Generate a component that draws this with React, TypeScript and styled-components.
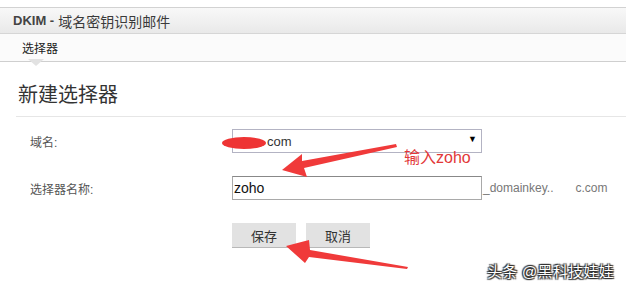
import React from "react";
import styled, { createGlobalStyle } from "styled-components";

const GlobalStyle = createGlobalStyle`
  html, body {
    margin: 0;
    padding: 0;
    background: #ffffff;
  }
  body {
    font-family: Arial, "Liberation Sans", "Noto Sans CJK SC", sans-serif;
    color: #333;
  }
`;

const Page = styled.div`
  position: relative;
  width: 626px;
  height: 288px;
  padding-top: 7px;
  box-sizing: border-box;
  overflow: hidden;
`;

const TitleBar = styled.div`
  height: 27px;
  border-top: 1px solid #d2d2d2;
  border-bottom: 1px solid #d6d6d6;
  background: linear-gradient(#f8f8f8, #e9e9e9);
  display: flex;
  align-items: center;
  padding-left: 13px;
  font-size: 13px;
  font-weight: bold;
  color: #444;
  box-sizing: border-box;
`;

const TitleCn = styled.span`
  font-weight: normal;
  font-size: 14px;
  margin-left: 4px;
  color: #3a3a3a;
`;

const TabBar = styled.div`
  height: 28px;
  background: #fbfbfb;
  border-bottom: 1px solid #cfcfcf;
  display: flex;
  align-items: center;
  padding-left: 22px;
  box-sizing: border-box;
`;

const Tab = styled.div`
  position: relative;
  font-size: 12px;
  color: #222;
  &::after {
    content: "";
    position: absolute;
    left: 6px;
    top: 20px;
    border-left: 8px solid transparent;
    border-right: 8px solid transparent;
    border-top: 7px solid #e2e2e2;
  }
`;

const Content = styled.div`
  padding: 22px 0 0 16px;
`;

const Heading = styled.h2`
  margin: 0;
  padding: 0 0 10px 2px;
  font-size: 20px;
  font-weight: normal;
  color: #333;
  line-height: 22px;
  border-bottom: 1px solid #e6e6e6;
`;

const Form = styled.div`
  display: grid;
  grid-template-columns: 202px auto;
  row-gap: 23px;
  padding: 12px 0 0 14px;
  align-items: center;
`;

const Label = styled.div`
  font-size: 12px;
  color: #555;
`;

const Field = styled.div`
  display: flex;
  align-items: center;
  position: relative;
`;

const SelectBox = styled.div`
  position: relative;
  width: 250px;
  height: 24px;
  border: 1px solid #b3b3c3;
  box-sizing: border-box;
  display: flex;
  align-items: center;
  padding-left: 34px;
  font-size: 13px;
  color: #333;
`;

const Redact = styled.div`
  position: absolute;
  left: -11px;
  top: 7px;
  width: 44px;
  height: 12px;
  border-radius: 50%;
  background: #ee3434;
`;

const Caret = styled.span`
  position: absolute;
  right: 4px;
  top: 4px;
  font-size: 9px;
  color: #000;
`;

const TextInput = styled.div`
  width: 250px;
  height: 24px;
  border: 1px solid #a9a9a9;
  border-top-color: #888;
  box-sizing: border-box;
  display: flex;
  align-items: center;
  padding-left: 1px;
  font-size: 14px;
  color: #111;
`;

const Suffix = styled.span`
  font-size: 12px;
  color: #777;
  margin-left: 1px;
  display: flex;
  gap: 22px;
`;

const Buttons = styled.div`
  display: flex;
  gap: 10px;
`;

const Button = styled.div`
  width: 64px;
  height: 25px;
  background: #e2e2e2;
  border-bottom: 1px solid #b8b8b8;
  box-sizing: border-box;
  display: flex;
  align-items: center;
  justify-content: center;
  font-size: 13px;
  color: #333;
`;

const Overlay = styled.svg`
  position: absolute;
  left: 0;
  top: 0;
  pointer-events: none;
`;

const Note = styled.div`
  position: absolute;
  left: 404px;
  top: 144px;
  font-size: 16px;
  color: #e23838;
`;

const Watermark = styled.div`
  position: absolute;
  left: 487px;
  top: 260px;
  font-size: 15px;
  color: #ffffff;
  letter-spacing: 0.3px;
  text-shadow: 0 0 1px #222, 1px 1px 1px #333, -1px -1px 1px #333, 1px -1px 1px #333, -1px 1px 1px #333;
`;

const App: React.FC = () => {
  return (
    <Page>
      <GlobalStyle />
      <TitleBar>
        DKIM -<TitleCn>域名密钥识别邮件</TitleCn>
      </TitleBar>
      <TabBar>
        <Tab>选择器</Tab>
      </TabBar>
      <Content>
        <Heading>新建选择器</Heading>
        <Form>
          <Label>域名:</Label>
          <Field>
            <SelectBox>
              <Redact />
              com
              <Caret>▼</Caret>
            </SelectBox>
          </Field>
          <Label>选择器名称:</Label>
          <Field>
            <TextInput>zoho</TextInput>
            <Suffix>
              <span>_domainkey..</span>
              <span>c.com</span>
            </Suffix>
          </Field>
          <div />
          <Buttons>
            <Button>保存</Button>
            <Button>取消</Button>
          </Buttons>
        </Form>
      </Content>
      <Note>输入zoho</Note>
      <Overlay width="626" height="288" viewBox="0 0 626 288">
        <polygon
          fill="#f03a3a"
          points="396,144 302,161 302,154 282,170 307,177 304,168 397,147"
        />
        <polygon
          fill="#f03a3a"
          points="286,246 309,240 310,250 408,267 407,269 309,257 305,263"
        />
      </Overlay>
      <Watermark>头条 @黑科技娃娃</Watermark>
    </Page>
  );
};

export default App;
